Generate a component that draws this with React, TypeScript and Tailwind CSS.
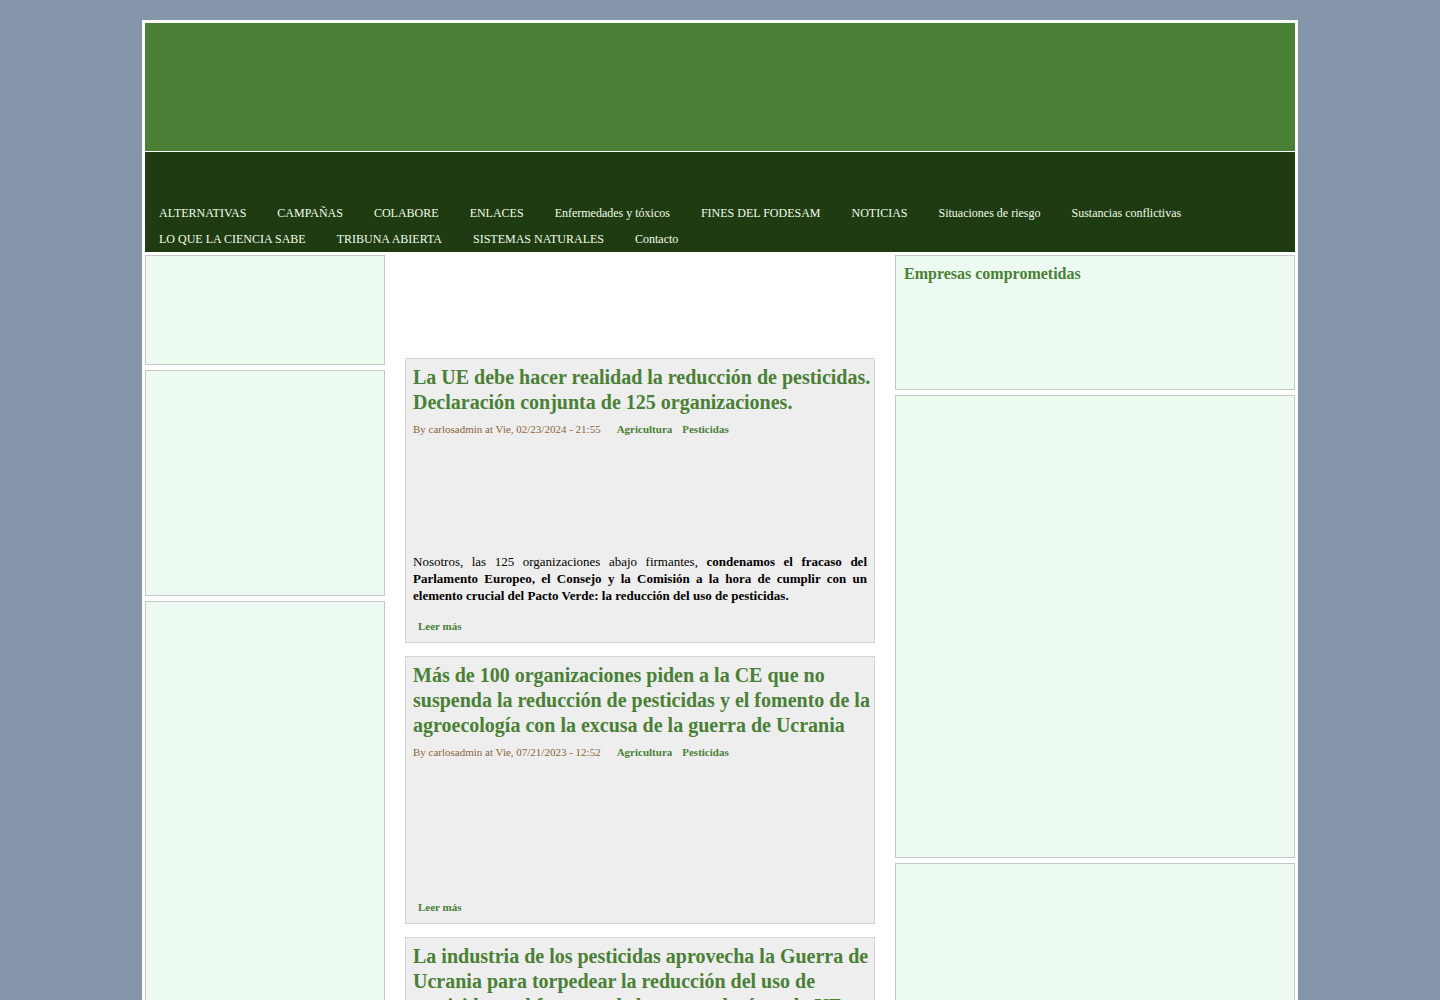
const menu = [
  'ALTERNATIVAS',
  'CAMPAÑAS',
  'COLABORE',
  'ENLACES',
  'Enfermedades y tóxicos',
  'FINES DEL FODESAM',
  'NOTICIAS',
  'Situaciones de riesgo',
  'Sustancias conflictivas',
  'LO QUE LA CIENCIA SABE',
  'TRIBUNA ABIERTA',
  'SISTEMAS NATURALES',
  'Contacto',
];

const tags = ['Agricultura', 'Pesticidas'];

const posts = [
  {
    title: 'La UE debe hacer realidad la reducción de pesticidas. Declaración conjunta de 125 organizaciones.',
    date: 'Vie, 02/23/2024 - 21:55',
    body: (
      <p className="mt-29 pr-1 text-justify text-[13px] leading-[17px] text-black">
        Nosotros, las 125 organizaciones abajo firmantes,{' '}
        <strong>
          condenamos el fracaso del Parlamento Europeo, el Consejo y la Comisión a la hora de cumplir con un elemento
          crucial del Pacto Verde: la reducción del uso de pesticidas.
        </strong>
      </p>
    ),
  },
  {
    title:
      'Más de 100 organizaciones piden a la CE que no suspenda la reducción de pesticidas y el fomento de la agroecología con la excusa de la guerra de Ucrania',
    date: 'Vie, 07/21/2023 - 12:52',
    body: <div className="h-[125px]" />,
  },
  {
    title:
      'La industria de los pesticidas aprovecha la Guerra de Ucrania para torpedear la reducción del uso de pesticidas y el fomento de la agroecología en la UE',
    date: 'Vie, 07/21/2023 - 12:40',
    body: <div className="h-[125px]" />,
  },
];

const block = 'border border-[#c3c9c5] bg-[#ecfaf2]';

const App = () => {
  return (
    <div className="min-h-screen bg-[#8596aa] px-4 pt-5 font-['Liberation_Serif',serif]">
      <div className="mx-auto max-w-[1156px] bg-white p-[3px]">
        <header>
          <div className="h-32 bg-[#4a8035]" />
          <nav className="mt-px bg-[#1e3b11] pt-12" aria-label="Principal">
            <ul className="flex flex-wrap gap-x-[31px] px-3.5">
              {menu.map((item) => (
                <li key={item}>
                  <a href="#" className="block text-[12px] leading-[26px] text-[#f3fbe9]">
                    {item}
                  </a>
                </li>
              ))}
            </ul>
          </nav>
        </header>

        <div className="mt-[3px] flex gap-5">
          <aside className="flex w-60 shrink-0 flex-col gap-[5px]">
            <div className={`h-[110px] ${block}`} />
            <div className={`h-[226px] ${block}`} />
            <div className={`h-[560px] ${block}`} />
          </aside>

          <main className="flex min-w-0 flex-1 flex-col gap-[13px] pt-[103px]">
            {posts.map((post) => (
              <article key={post.title} className="border border-[#d6d6d6] bg-[#eeeeee] pt-1.5 pr-[3px] pb-2 pl-[7px]">
                <h2 className="text-[20px] leading-[25px] font-bold text-[#4a8035]">
                  <a href="#">{post.title}</a>
                </h2>
                <div className="mt-1.5 flex text-[11px] leading-4">
                  <span className="text-[#8b6539]">By carlosadmin at {post.date}</span>
                  <ul className="ml-4 flex gap-2.5 font-bold text-[#4a8035]">
                    {tags.map((tag) => (
                      <li key={tag}>
                        <a href="#">{tag}</a>
                      </li>
                    ))}
                  </ul>
                </div>
                {post.body}
                <a href="#" className="mt-3.5 ml-[5px] block text-[11px] leading-4 font-bold text-[#4a8035]">
                  Leer más
                </a>
              </article>
            ))}
          </main>

          <aside className="flex w-[400px] shrink-0 flex-col gap-[5px]">
            <div className={`h-[135px] px-2 pt-2 ${block}`}>
              <h2 className="text-[16px] leading-5 font-bold text-[#4a8035]">Empresas comprometidas</h2>
            </div>
            <div className={`h-[463px] ${block}`} />
            <div className={`h-[300px] ${block}`} />
          </aside>
        </div>
      </div>
    </div>
  );
};

export default App;
